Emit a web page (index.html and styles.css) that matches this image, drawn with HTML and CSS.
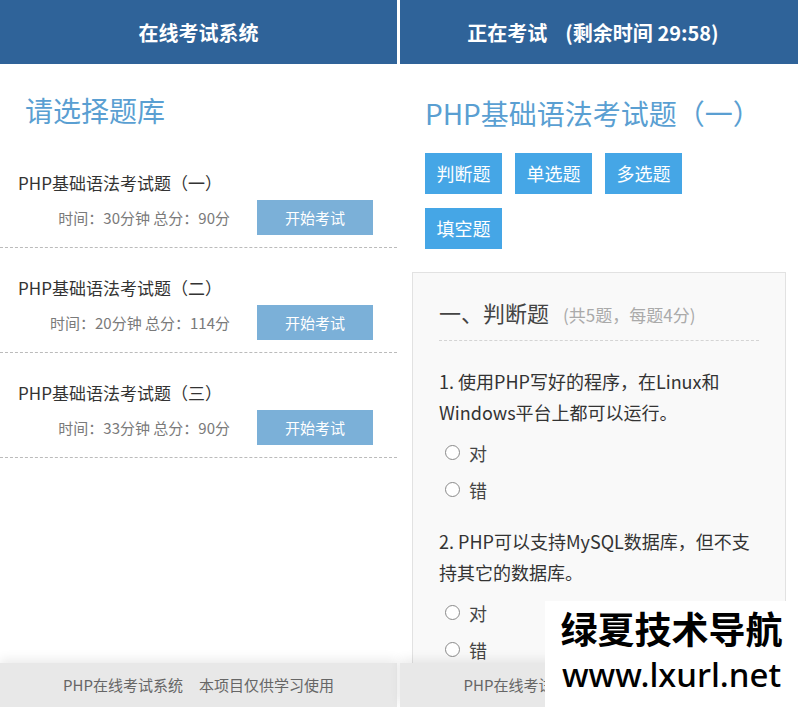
FILE: index.html
```html
<!DOCTYPE html>
<html lang="zh-CN">
<head>
    <meta charset="UTF-8">
    <meta name="viewport" content="width=device-width, initial-scale=1.0">
    <title>PHP在线考试系统</title>
    <link rel="stylesheet" href="styles.css">
</head>
<body>
    <div class="screens">
        <section class="screen">
            <header class="bar">在线考试系统</header>
            <main class="content">
                <h1 class="page-title">请选择题库</h1>
                <ul class="exam-list">
                    <li class="exam">
                        <div class="exam-name">PHP基础语法考试题（一）</div>
                        <div class="exam-row">
                            <span class="exam-meta">时间：30分钟 总分：90分</span>
                            <a class="start-btn" href="#">开始考试</a>
                        </div>
                    </li>
                    <li class="exam">
                        <div class="exam-name">PHP基础语法考试题（二）</div>
                        <div class="exam-row">
                            <span class="exam-meta">时间：20分钟 总分：114分</span>
                            <a class="start-btn" href="#">开始考试</a>
                        </div>
                    </li>
                    <li class="exam">
                        <div class="exam-name">PHP基础语法考试题（三）</div>
                        <div class="exam-row">
                            <span class="exam-meta">时间：33分钟 总分：90分</span>
                            <a class="start-btn" href="#">开始考试</a>
                        </div>
                    </li>
                </ul>
            </main>
            <footer class="foot">PHP在线考试系统<span>本项目仅供学习使用</span></footer>
        </section>

        <section class="screen">
            <header class="bar bar-exam">正在考试<span class="timer">(剩余时间 29:58)</span></header>
            <main class="content">
                <h1 class="page-title paper-title">PHP基础语法考试题（一）</h1>
                <nav class="types">
                    <a href="#">判断题</a>
                    <a href="#">单选题</a>
                    <a href="#">多选题</a>
                    <a href="#">填空题</a>
                </nav>
                <div class="card">
                    <h2 class="card-title">一、判断题<small>(共5题，每题4分)</small></h2>
                    <div class="question">
                        <p>1. 使用PHP写好的程序，在Linux和Windows平台上都可以运行。</p>
                        <label class="opt"><span class="radio"></span>对</label>
                        <label class="opt"><span class="radio"></span>错</label>
                    </div>
                    <div class="question">
                        <p>2. PHP可以支持MySQL数据库，但不支持其它的数据库。</p>
                        <label class="opt"><span class="radio"></span>对</label>
                        <label class="opt"><span class="radio"></span>错</label>
                    </div>
                </div>
            </main>
            <footer class="foot">PHP在线考试系统<span>本项目仅供学习使用</span></footer>
        </section>

        <div class="watermark">
            <div class="wm-cn">绿夏技术导航</div>
            <div class="wm-url">www.lxurl.net</div>
        </div>
    </div>
</body>
</html>
```

FILE: styles.css
```css
body {
    margin: 0;
    background: #fff;
    font-family: "Noto Sans CJK SC", "Noto Sans", sans-serif;
    color: #333;
}
.screens {
    position: relative;
    display: grid;
    grid-template-columns: 397px 398px;
    gap: 3px;
    width: 798px;
    height: 707px;
    overflow: hidden;
}
.screen {
    display: flex;
    flex-direction: column;
    height: 707px;
    background: #fff;
}
.bar {
    height: 64px;
    line-height: 66px;
    background: #2f6399;
    color: #fff;
    font-size: 20px;
    font-weight: bold;
    text-align: center;
    flex-shrink: 0;
}
.bar-exam {
    padding-right: 12px;
}
.timer {
    margin-left: 18px;
}
.content {
    flex: 1;
    overflow: hidden;
}
.page-title {
    margin: 26px 0 13px;
    padding: 0 25px;
    font-size: 28px;
    font-weight: normal;
    line-height: 40px;
    color: #5a9fd2;
}
.exam-list {
    list-style: none;
    margin: 0;
    padding: 0;
}
.exam {
    padding: 28px 24px 12px 18px;
    border-bottom: 1px dashed #bbb;
}
.exam-name {
    font-size: 17px;
    line-height: 24px;
    color: #333;
}
.exam-row {
    display: flex;
    justify-content: flex-end;
    align-items: center;
    gap: 27px;
    margin-top: 5px;
}
.exam-meta {
    font-size: 15px;
    color: #7a7a7a;
}
.start-btn {
    width: 116px;
    height: 35px;
    line-height: 35px;
    background: #7bb0d8;
    color: #fff;
    font-size: 15px;
    text-align: center;
    text-decoration: none;
}
.paper-title {
    margin: 29px 0 20px;
}
.types {
    display: flex;
    flex-wrap: wrap;
    gap: 14px 13px;
    padding: 0 25px;
    width: 290px;
}
.types a {
    width: 77px;
    height: 41px;
    line-height: 41px;
    background: #45a6e6;
    color: #fff;
    font-size: 18px;
    text-align: center;
    text-decoration: none;
}
.card {
    margin: 23px 12px 0;
    padding: 24px 26px 0;
    background: #f9f9f9;
    border: 1px solid #e2e2e2;
    min-height: 400px;
}
.card-title {
    margin: 0;
    padding-bottom: 10px;
    border-bottom: 1px dashed #d4d4d4;
    font-size: 22px;
    font-weight: normal;
    line-height: 30px;
    color: #444;
}
.card-title small {
    margin-left: 14px;
    font-size: 17px;
    color: #aaa;
}
.question {
    margin-top: 25px;
}
.question + .question {
    margin-top: 18px;
}
.question p {
    margin: 0 0 6px;
    font-size: 18px;
    line-height: 31px;
    color: #333;
}
.opt {
    display: flex;
    align-items: center;
    gap: 9px;
    height: 37px;
    padding-left: 6px;
    font-size: 18px;
    color: #444;
}
.radio {
    width: 13px;
    height: 13px;
    border: 1px solid #8a8a8a;
    border-radius: 50%;
    background: #fff;
}
.foot {
    height: 44px;
    line-height: 44px;
    flex-shrink: 0;
    background: #e8e8e8;
    box-shadow: 0 -4px 10px rgba(0, 0, 0, 0.08);
    color: #666;
    font-size: 15px;
    text-align: center;
    position: relative;
}
.foot span {
    margin-left: 16px;
}
.watermark {
    position: absolute;
    left: 545px;
    top: 601px;
    width: 253px;
    height: 106px;
    background: #fff;
    color: #000;
    text-align: center;
}
.wm-cn {
    font-size: 37px;
    font-weight: bold;
    line-height: 50px;
    margin-top: 2px;
}
.wm-url {
    font-family: "Noto Sans", sans-serif;
    font-size: 33px;
    font-weight: 500;
    line-height: 44px;
}
```
